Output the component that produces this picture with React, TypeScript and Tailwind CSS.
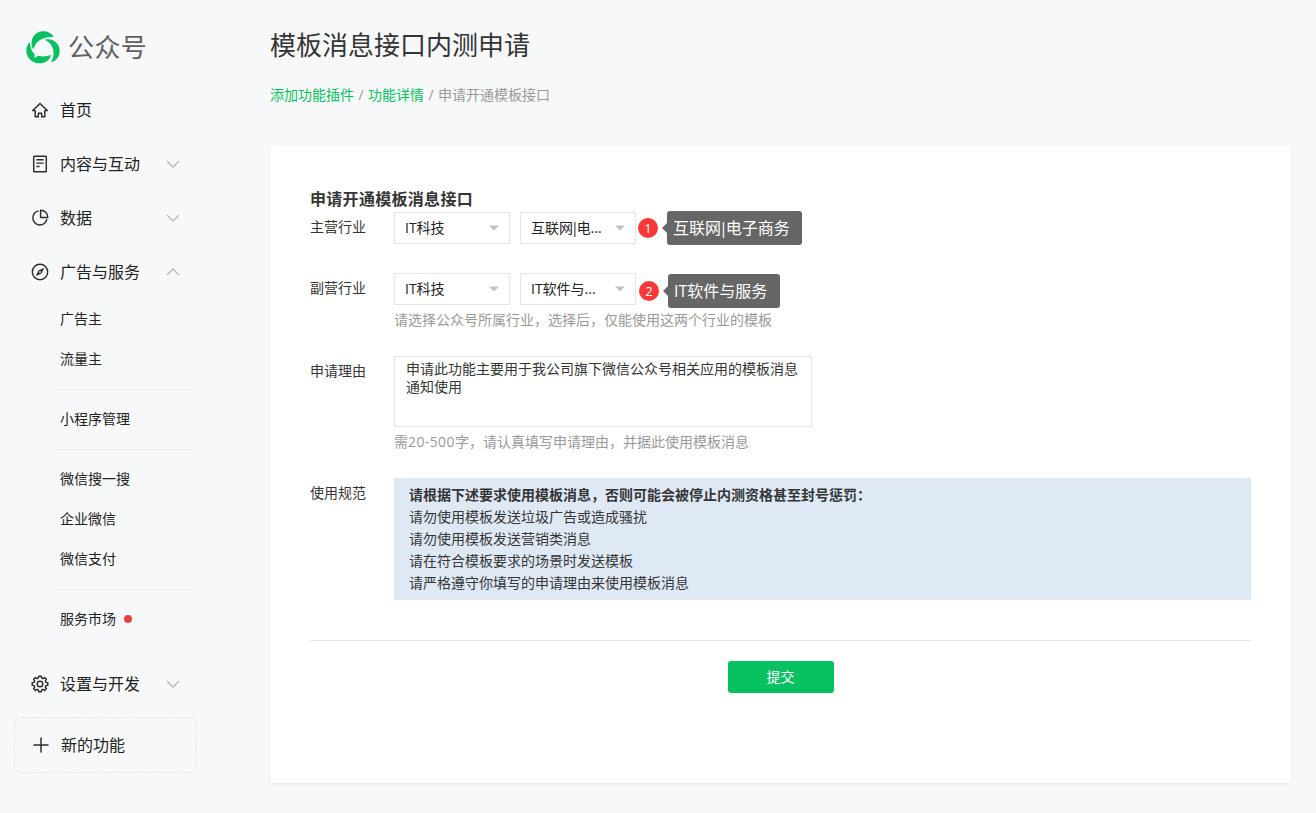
import React from 'react';

// ── Icons ─────────────────────────────────────────────────────────────────────

const iconProps = {
  width: 18,
  height: 18,
  viewBox: '0 0 18 18',
  fill: 'none',
  stroke: '#2a2b2d',
  strokeWidth: 1.45,
  className: 'shrink-0',
};

const Logo = () => (
  <svg width="34" height="33" viewBox="0 0 102 99" fill="#07c160" className="shrink-0">
    <path d="M19 51C10 23 28 1 52 1C66 1 76 7 83 17C52 17 32 27 23 52C22 54 20 54 19 51Z" />
    <path d="M12 33C13 50 17 62 26 69L25 81L37 74C51 78 64 76 75 71C71 88 57 98 40 97C16 96 1 78 1 59C1 48 5 39 12 33Z" />
    <path d="M56 26C80 19 101 37 101 60C101 77 91 89 75 94C90 70 84 38 56 26Z" />
  </svg>
);

const HomeIcon = () => (
  <svg {...iconProps} strokeLinejoin="round">
    <path d="M9 2.6L1.7 9.6H4.2V15.8H7.3V12.3H10.7V15.8H13.8V9.6H16.3Z" />
  </svg>
);

const DocIcon = () => (
  <svg {...iconProps}>
    <rect x="2.7" y="1.3" width="12.6" height="15.4" rx="0.8" />
    <path d="M5.4 4.8H12.6M5.4 8.1H12.6M5.4 11.4H8.6" />
  </svg>
);

const PieIcon = () => (
  <svg {...iconProps} strokeLinejoin="round">
    <path d="M7.6 1.9A7.1 7.1 0 1 0 15.9 10.2" />
    <path d="M9.6 1.2V8.4H16.8A7.2 7.2 0 0 0 9.6 1.2Z" />
  </svg>
);

const CompassIcon = () => (
  <svg {...iconProps}>
    <circle cx="9" cy="9" r="7.7" />
    <path d="M13.3 4.7L10.6 10.6L4.7 13.3L7.4 7.4Z" fill="#2a2b2d" stroke="none" />
    <circle cx="9" cy="9" r="0.9" fill="#f6f8f9" stroke="none" />
  </svg>
);

// Eight teeth, each one drawn from four points round the hub
const gearPoints = Array.from({ length: 8 }, (_, i) => {
  const mid = (i * Math.PI) / 4;
  return [
    [6.1, -0.27],
    [7.9, -0.17],
    [7.9, 0.17],
    [6.1, 0.27],
  ]
    .map(([r, a]) => `${(9 + r * Math.cos(mid + a)).toFixed(2)},${(9 + r * Math.sin(mid + a)).toFixed(2)}`)
    .join(' ');
}).join(' ');

const GearIcon = () => (
  <svg {...iconProps} strokeLinejoin="round">
    <polygon points={gearPoints} />
    <circle cx="9" cy="9" r="2.8" />
  </svg>
);

const PlusIcon = () => (
  <svg {...iconProps}>
    <path d="M9 1.5V16.5M1.5 9H16.5" />
  </svg>
);

const Chevron = ({ up }: { up?: boolean }) => (
  <svg width="14" height="8" viewBox="0 0 14 8" fill="none" stroke="#b4b6b8" strokeWidth="1.3">
    <path d={up ? 'M1 7L7 1L13 7' : 'M1 1L7 7L13 1'} />
  </svg>
);

// ── Sidebar ───────────────────────────────────────────────────────────────────

const NavItem = ({
  icon,
  label,
  arrow,
}: {
  icon: React.ReactNode;
  label: string;
  arrow?: 'up' | 'down';
}) => (
  <a className="flex h-[54px] items-center pr-8 pl-[31px] text-base text-[#222]">
    {icon}
    <span className="ml-[11px] flex-1">{label}</span>
    {arrow && <Chevron up={arrow === 'up'} />}
  </a>
);

const subGroups = [
  ['广告主', '流量主'],
  ['小程序管理'],
  ['微信搜一搜', '企业微信', '微信支付'],
  ['服务市场'],
];

const Sidebar = () => (
  <aside className="w-[212px] shrink-0 bg-[#f6f8f9]">
    <div className="flex h-[83px] items-center pt-[11px] pl-[26px]">
      <Logo />
      <span className="ml-2 text-[26px] leading-8 tracking-[0.4px] text-[#606060]">公众号</span>
    </div>
    <nav>
      <NavItem icon={<HomeIcon />} label="首页" />
      <NavItem icon={<DocIcon />} label="内容与互动" arrow="down" />
      <NavItem icon={<PieIcon />} label="数据" arrow="down" />
      <NavItem icon={<CompassIcon />} label="广告与服务" arrow="up" />
      {subGroups.map((group, i) => (
        <div key={group[0]}>
          {i > 0 && <div className="mt-2.5 mr-4 mb-[9px] ml-14 h-px bg-[#ebedee]" />}
          {group.map((label) => (
            <a key={label} className="flex h-10 items-center pl-[60px] text-sm text-[#222]">
              {label}
              {label === '服务市场' && <i className="ml-2 size-2 rounded-full bg-[#e64340]" />}
            </a>
          ))}
        </div>
      ))}
      <div className="mt-[18px]">
        <NavItem icon={<GearIcon />} label="设置与开发" arrow="down" />
      </div>
    </nav>
    <button className="mt-1.5 ml-3.5 flex h-14 w-[183px] items-center rounded-lg border border-dashed border-[#e0e2e4] pl-[17px] text-base text-[#222]">
      <PlusIcon />
      <span className="ml-[11px]">新的功能</span>
    </button>
  </aside>
);

// ── Form pieces ───────────────────────────────────────────────────────────────

const Bar = () => <span className="-mx-[2px]">|</span>;

const Select = ({ children }: { children: React.ReactNode }) => (
  <div className="mr-2.5 flex h-8 w-[116px] items-center justify-between border border-[#e4e5ec] px-2.5 text-sm text-[#222]">
    <span>{children}</span>
    <svg width="10" height="6" viewBox="0 0 10 6" fill="#c2c2c2">
      <path d="M0 0.5H10L5 5.5Z" />
    </svg>
  </div>
);

const Callout = ({ n, children }: { n: number; children: React.ReactNode }) => (
  <div className="flex items-center">
    <span className="flex size-5 items-center justify-center rounded-full bg-[#fb3838] text-[13px] leading-5 text-white">
      {n}
    </span>
    <svg width="5" height="10" viewBox="0 0 5 10" fill="#666" className="ml-1">
      <path d="M5 0V10L0 5Z" />
    </svg>
    <span className="flex h-[34px] items-center rounded-[3px] bg-[#666] text-base whitespace-nowrap text-white">
      <span className="pr-[12.5px] pl-1.5">{children}</span>
    </span>
  </div>
);

const Field = ({ label, children }: { label: string; children: React.ReactNode }) => (
  <div className="flex">
    <label className="w-[84px] shrink-0 pt-1 leading-[22px]">{label}</label>
    <div className="flex-1">{children}</div>
  </div>
);

const rules = [
  '请勿使用模板发送垃圾广告或造成骚扰',
  '请勿使用模板发送营销类消息',
  '请在符合模板要求的场景时发送模板',
  '请严格遵守你填写的申请理由来使用模板消息',
];

// ── Page ──────────────────────────────────────────────────────────────────────

const App: React.FC = () => {
  return (
    <div className="flex h-[813px] w-[1316px] overflow-hidden bg-[#f7f8fa] font-['Open_Sans','Noto_Sans_CJK_SC',sans-serif] text-sm text-[#353535]">
      <Sidebar />
      <main className="flex-1 pt-6 pr-[25px] pl-[58px]">
        <h1 className="text-[26px] leading-[42px]">模板消息接口内测申请</h1>
        <div className="mt-[18px] flex leading-[22px] text-[#9a9a9a]">
          <a className="text-[#07c160]">添加功能插件</a>
          <span className="w-3.5 text-center">/</span>
          <a className="text-[#07c160]">功能详情</a>
          <span className="w-3.5 text-center">/</span>
          <span>申请开通模板接口</span>
        </div>

        <section className="mt-10 h-[637px] rounded-[3px] bg-white px-10 pt-[41px] shadow-[0_1px_3px_rgba(0,0,0,0.07)]">
          <h2 className="mb-px text-base leading-6 font-bold tracking-[0.3px]">申请开通模板消息接口</h2>

          <Field label="主营行业">
            <div className="flex h-8 items-center">
              <Select>IT科技</Select>
              <Select>
                互联网
                <Bar />
                电...
              </Select>
              <div className="-ml-2">
                <Callout n={1}>
                  互联网
                  <Bar />
                  电子商务
                </Callout>
              </div>
            </div>
          </Field>

          <div className="mt-[29px]">
            <Field label="副营行业">
              <div className="flex h-8 items-center">
                <Select>IT科技</Select>
                <Select>IT软件与...</Select>
                <div className="-ml-[7px] pt-1">
                  <Callout n={2}>IT软件与服务</Callout>
                </div>
              </div>
              <p className="mt-1 leading-[22px] text-[#9a9a9a]">
                请选择公众号所属行业，选择后，仅能使用这两个行业的模板
              </p>
            </Field>
          </div>

          <div className="mt-[25px]">
            <Field label="申请理由">
              <div className="h-[71px] w-[418px] border border-[#e4e5ec] px-[11px] pt-[3px] leading-[18px]">
                申请此功能主要用于我公司旗下微信公众号相关应用的模板消息通知使用
              </div>
              <p className="mt-1 leading-[22px] text-[#9a9a9a]">
                需<span className="tracking-[0.4px]">20-500</span>字，请认真填写申请理由，并据此使用模板消息
              </p>
            </Field>
          </div>

          <div className="mt-[25px]">
            <Field label="使用规范">
              <div className="h-[122px] bg-[#dfe9f6] px-[15px] py-1.5 leading-[22px]">
                <p className="font-bold">请根据下述要求使用模板消息，否则可能会被停止内测资格甚至封号惩罚：</p>
                {rules.map((rule) => (
                  <p key={rule}>{rule}</p>
                ))}
              </div>
            </Field>
          </div>

          <div className="mt-10 flex justify-center border-t border-[#e4e5ec] pt-5">
            <button className="h-8 w-[106px] rounded-[3px] bg-[#07c160] text-sm text-white">提交</button>
          </div>
        </section>
      </main>
    </div>
  );
};

export default App;
